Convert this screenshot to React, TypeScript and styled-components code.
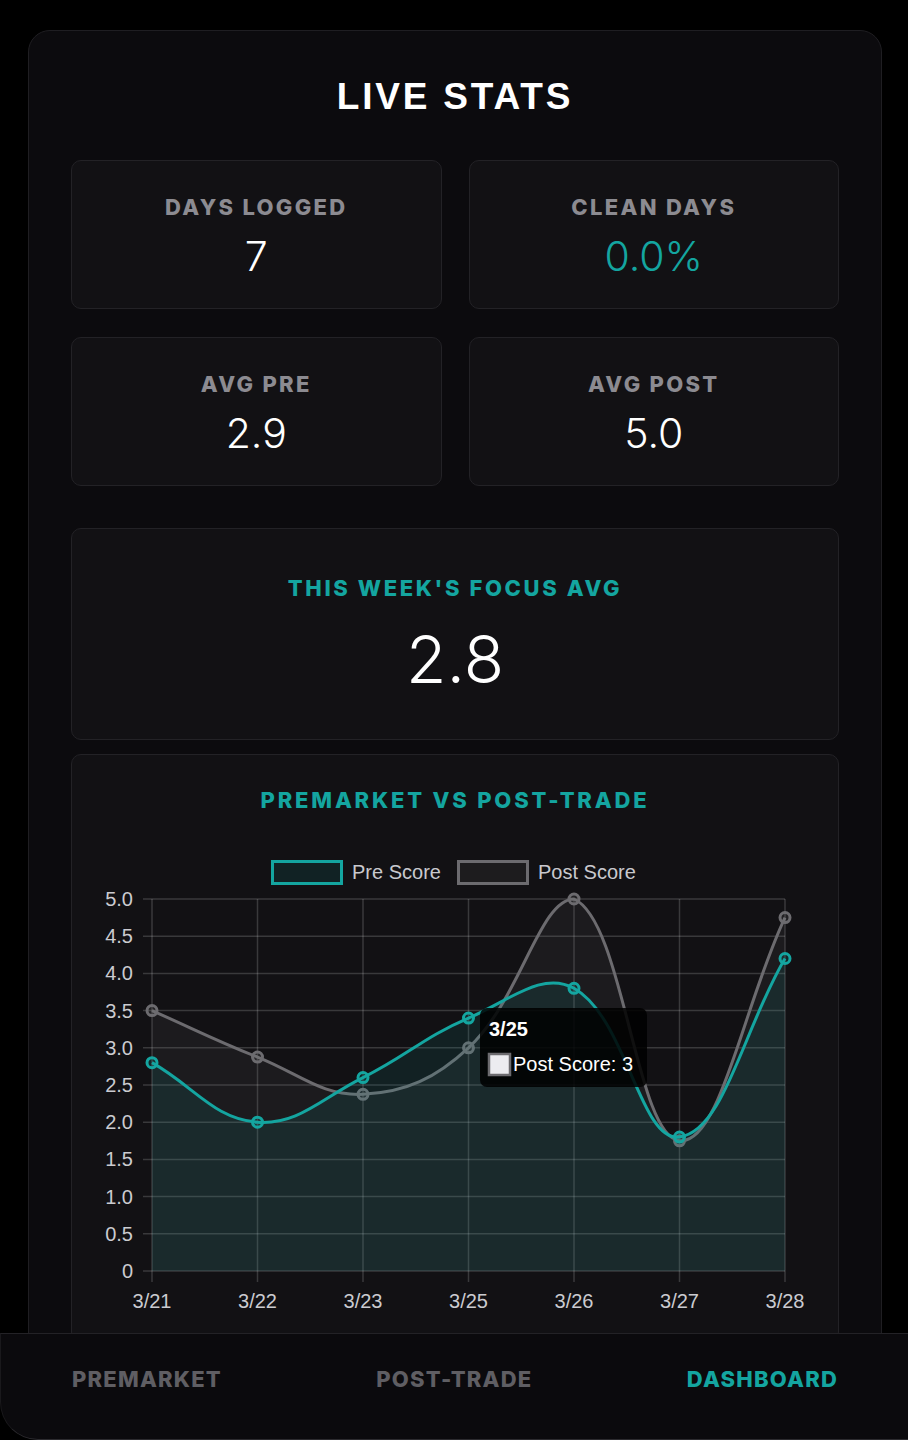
import styled, { createGlobalStyle } from 'styled-components';

const TEAL = '#14a5a0';
const GRAY_LINE = '#6c6b6f';

const GlobalStyle = createGlobalStyle`
    html, body {
        margin: 0;
        background: #000;
        font-family: Inter, 'Liberation Sans', sans-serif;
        color: #fff;
    }
    * { box-sizing: border-box; }
`;

const Page = styled.div`
    padding: 30px 26px 140px 28px;
`;

const Panel = styled.main`
    background: #0c0b0e;
    border: 1px solid #1f1e22;
    border-radius: 22px;
    padding: 44px 42px 40px;
`;

const Title = styled.h1`
    margin: 0 0 41px;
    text-align: center;
    font-family: 'Liberation Sans', Arial, sans-serif;
    font-weight: 700;
    font-size: 37px;
    line-height: 44px;
    letter-spacing: 2.8px;
`;

const StatGrid = styled.div`
    display: grid;
    grid-template-columns: 1fr 1fr;
    column-gap: 27px;
    row-gap: 28px;
`;

const Card = styled.section`
    background: #121114;
    border: 1px solid #232226;
    border-radius: 10px;
`;

const StatCard = styled(Card)`
    height: 149px;
    padding-top: 32px;
    text-align: center;
`;

const StatLabel = styled.div`
    font-weight: 800;
    font-size: 22px;
    line-height: 28px;
    letter-spacing: 2.3px;
    color: #8c8b91;
`;

const StatValue = styled.div<{ $accent?: boolean }>`
    margin-top: 10px;
    font-weight: 300;
    font-size: 41px;
    line-height: 50px;
    color: ${(p) => (p.$accent ? TEAL : '#fff')};
`;

const FocusCard = styled(Card)`
    margin-top: 42px;
    height: 212px;
    padding-top: 45px;
    text-align: center;
`;

const FocusLabel = styled.div`
    font-weight: 800;
    font-size: 22px;
    line-height: 28px;
    letter-spacing: 2.6px;
    color: ${TEAL};
`;

const FocusValue = styled.div`
    margin-top: 19px;
    font-weight: 300;
    font-size: 66px;
    line-height: 76px;
    color: #fff;
`;

const ChartCard = styled(Card)`
    margin-top: 14px;
    padding-top: 31px;
    text-align: center;
`;

const ChartTitle = styled.h2`
    margin: 0;
    font-weight: 800;
    font-size: 22px;
    line-height: 28px;
    letter-spacing: 2.8px;
    color: ${TEAL};
`;

const ChartSvg = styled.svg`
    display: block;
    margin-top: 27px;
    font-family: 'Liberation Sans', Arial, sans-serif;
`;

const BottomNav = styled.nav`
    position: fixed;
    left: 0;
    right: 0;
    bottom: 0;
    height: 107px;
    display: flex;
    justify-content: space-between;
    align-items: flex-start;
    padding: 31px 70px 0 71px;
    background: #0b0a0d;
    border-top: 1px solid #232226;
    border-bottom: 1px solid #2c2b2f;
    border-left: 1px solid #1a191c;
    border-bottom-left-radius: 38px;
`;

const NavItem = styled.a<{ $active?: boolean }>`
    font-weight: 800;
    font-size: 22px;
    line-height: 28px;
    letter-spacing: 1.2px;
    color: ${(p) => (p.$active ? TEAL : '#5f5e63')};
    text-decoration: none;
`;

// chart geometry (svg coords)
const W = 765;
const H = 500;
const LEFT = 80;
const RIGHT = 713;
const TOP = 58;
const BOTTOM = 430;

const labels = ['3/21', '3/22', '3/23', '3/25', '3/26', '3/27', '3/28'];
const pre = [2.8, 2.0, 2.6, 3.4, 3.8, 1.8, 4.2];
const post = [3.5, 2.875, 2.375, 3, 5, 1.75, 4.75];

type Pt = { x: number; y: number };

const xAt = (i: number) => LEFT + ((RIGHT - LEFT) / (labels.length - 1)) * i;
const yAt = (v: number) => BOTTOM - ((BOTTOM - TOP) / 5) * v;
const clamp = (v: number, a: number, b: number) => Math.max(a, Math.min(b, v));

// same spline as chart.js (tension .4, capped to the chart area)
const splinePath = (values: number[]) => {
    const pts: Pt[] = values.map((v, i) => ({ x: xAt(i), y: yAt(v) }));
    const cps = pts.map((p, i) => {
        const prev = pts[i - 1] ?? p;
        const next = pts[i + 1] ?? p;
        const d01 = Math.hypot(p.x - prev.x, p.y - prev.y);
        const d12 = Math.hypot(next.x - p.x, next.y - p.y);
        const s01 = d01 + d12 ? d01 / (d01 + d12) : 0;
        const s12 = d01 + d12 ? d12 / (d01 + d12) : 0;
        const fa = 0.4 * s01;
        const fb = 0.4 * s12;
        const cap = (q: Pt) => ({ x: clamp(q.x, LEFT, RIGHT), y: clamp(q.y, TOP, BOTTOM) });
        return {
            prev: cap({ x: p.x - fa * (next.x - prev.x), y: p.y - fa * (next.y - prev.y) }),
            next: cap({ x: p.x + fb * (next.x - prev.x), y: p.y + fb * (next.y - prev.y) }),
        };
    });
    let d = `M${pts[0].x},${pts[0].y}`;
    for (let i = 1; i < pts.length; i++) {
        const a = cps[i - 1].next;
        const b = cps[i].prev;
        d += ` C${a.x},${a.y} ${b.x},${b.y} ${pts[i].x},${pts[i].y}`;
    }
    const fill = `${d} L${pts[pts.length - 1].x},${BOTTOM} L${pts[0].x},${BOTTOM} Z`;
    return { d, fill, pts };
};

const Chart = () => {
    const preLine = splinePath(pre);
    const postLine = splinePath(post);
    const ticks = Array.from({ length: 11 }, (_, i) => i * 0.5);
    const grid = 'rgba(255,255,255,0.17)';

    return (
        <ChartSvg width={W} height={H} viewBox={`0 0 ${W} ${H}`}>
            {/* legend */}
            <rect x={200.5} y={20.5} width={69} height={22} fill="rgba(20,165,160,0.12)" stroke={TEAL} strokeWidth={3} />
            <text x={280} y={38} fontSize={20} fill="#c9c9ce">Pre Score</text>
            <rect x={386.5} y={20.5} width={69} height={22} fill="rgba(128,128,128,0.1)" stroke={GRAY_LINE} strokeWidth={3} />
            <text x={466} y={38} fontSize={20} fill="#c9c9ce">Post Score</text>

            {/* grid */}
            {ticks.map((t) => (
                <g key={t}>
                    <line x1={LEFT - 9} x2={RIGHT} y1={yAt(t)} y2={yAt(t)} stroke={grid} strokeWidth={1.5} />
                    <text x={61} y={yAt(t) + 7} fontSize={20} fill="#cbcbd0" textAnchor="end">
                        {t === 0 ? '0' : t.toFixed(1)}
                    </text>
                </g>
            ))}
            {labels.map((l, i) => (
                <g key={l}>
                    <line x1={xAt(i)} x2={xAt(i)} y1={TOP} y2={BOTTOM + 11} stroke={grid} strokeWidth={1.5} />
                    <text x={xAt(i)} y={467} fontSize={20} fill="#cbcbd0" textAnchor="middle">{l}</text>
                </g>
            ))}

            {/* post (drawn first, under) */}
            <path d={postLine.fill} fill="rgba(128,128,128,0.09)" />
            <path d={postLine.d} fill="none" stroke={GRAY_LINE} strokeWidth={3} />
            {postLine.pts.map((p, i) => (
                <circle key={i} cx={p.x} cy={p.y} r={5} fill="rgba(128,128,128,0.15)" stroke={GRAY_LINE} strokeWidth={3} />
            ))}

            {/* pre */}
            <path d={preLine.fill} fill="rgba(20,165,160,0.11)" />
            <path d={preLine.d} fill="none" stroke={TEAL} strokeWidth={3} />
            {preLine.pts.map((p, i) => (
                <circle key={i} cx={p.x} cy={p.y} r={5} fill="rgba(20,165,160,0.15)" stroke={TEAL} strokeWidth={3} />
            ))}

            {/* tooltip */}
            <rect x={408} y={167} width={167} height={79} rx={7} fill="rgba(0,0,0,0.85)" />
            <text x={417} y={195} fontSize={20} fontWeight={700} fill="#fff">3/25</text>
            <rect x={417} y={213} width={21} height={21} fill="#ececf0" stroke={GRAY_LINE} strokeWidth={2.5} />
            <text x={441} y={230} fontSize={20} fill="#fff">Post Score: 3</text>
        </ChartSvg>
    );
};

const stats = [
    { label: 'DAYS LOGGED', value: '7' },
    { label: 'CLEAN DAYS', value: '0.0%', accent: true },
    { label: 'AVG PRE', value: '2.9' },
    { label: 'AVG POST', value: '5.0' },
];

export default function App() {
    return (
        <>
            <GlobalStyle />
            <Page>
                <Panel>
                    <Title>LIVE STATS</Title>
                    <StatGrid>
                        {stats.map((s) => (
                            <StatCard key={s.label}>
                                <StatLabel>{s.label}</StatLabel>
                                <StatValue $accent={s.accent}>{s.value}</StatValue>
                            </StatCard>
                        ))}
                    </StatGrid>
                    <FocusCard>
                        <FocusLabel>THIS WEEK'S FOCUS AVG</FocusLabel>
                        <FocusValue>2.8</FocusValue>
                    </FocusCard>
                    <ChartCard>
                        <ChartTitle>PREMARKET VS POST-TRADE</ChartTitle>
                        <Chart />
                    </ChartCard>
                </Panel>
            </Page>
            <BottomNav>
                <NavItem href="#">PREMARKET</NavItem>
                <NavItem href="#">POST-TRADE</NavItem>
                <NavItem href="#" $active>DASHBOARD</NavItem>
            </BottomNav>
        </>
    );
}
